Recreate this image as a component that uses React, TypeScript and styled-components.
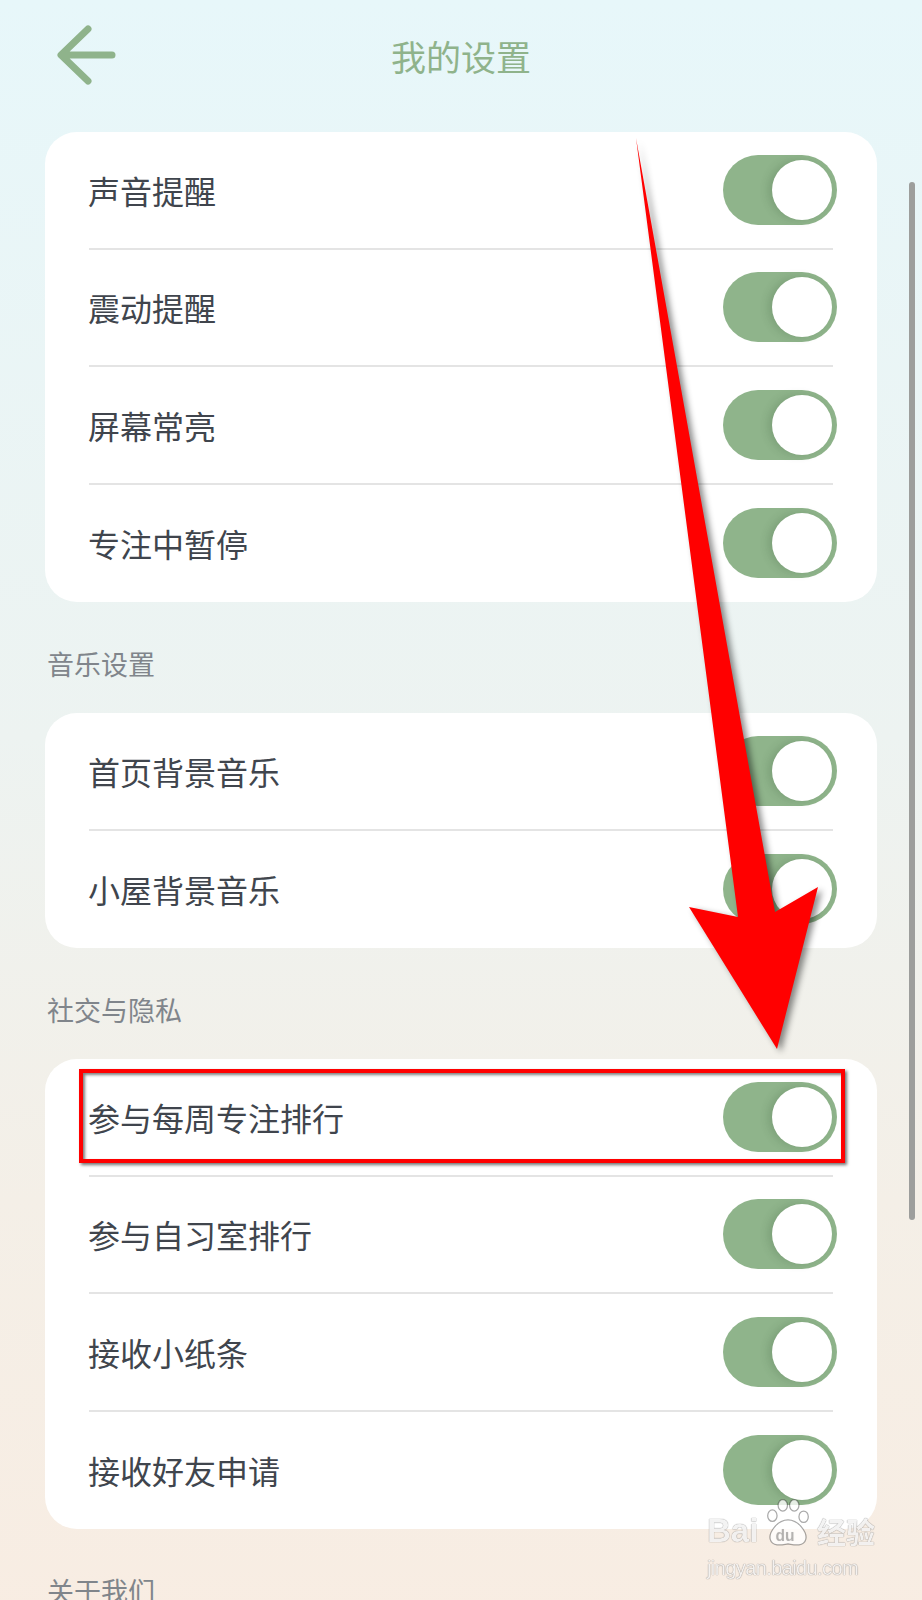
import React from 'react'
import styled, { createGlobalStyle } from 'styled-components'

const GlobalStyle = createGlobalStyle`
  html, body {
    margin: 0;
    padding: 0;
  }
  body {
    font-family: "Noto Sans CJK SC", "Noto Sans", sans-serif;
    background: linear-gradient(180deg, #e7f7fa 0%, #edf3f1 38%, #f4efe7 62%, #fbebdf 100%);
    min-height: 1600px;
  }
`

const Page = styled.div`
  position: relative;
  padding: 0 45px 60px;
  min-height: 1600px;
  box-sizing: border-box;
`

const Header = styled.header`
  display: grid;
  grid-template-columns: 1fr auto 1fr;
  align-items: center;
  height: 110px;
`

const BackButton = styled.button`
  justify-self: start;
  margin-left: 9px;
  padding: 0;
  border: 0;
  background: none;
  display: flex;
  cursor: pointer;
`

const Title = styled.h1`
  margin: 0;
  font-size: 35px;
  font-weight: 400;
  color: #8fb38b;
`

const Card = styled.section<{ $first?: boolean }>`
  margin-top: ${p => (p.$first ? '22px' : '0')};
  background: #fff;
  border-radius: 32px;
  overflow: hidden;
`

const Row = styled.div`
  display: flex;
  align-items: center;
  justify-content: space-between;
  height: 117.5px;
  box-sizing: border-box;
  margin: 0 44px;
  border-bottom: 2px solid #e4e4e4;
  &:last-child {
    border-bottom: none;
  }
`

const Label = styled.span`
  font-size: 32px;
  color: #40454d;
  margin-left: -1px;
`

const Track = styled.div<{ $on: boolean }>`
  width: 114px;
  height: 70px;
  margin-right: -4px;
  border-radius: 35px;
  background: ${p => (p.$on ? '#8fb48b' : '#d9d9d9')};
  display: flex;
  align-items: center;
  justify-content: ${p => (p.$on ? 'flex-end' : 'flex-start')};
  padding: 0 5px;
  box-sizing: border-box;
`

const Knob = styled.div`
  width: 60px;
  height: 60px;
  border-radius: 50%;
  background: #fff;
  box-shadow: -4px 0 8px rgba(40, 70, 40, 0.18);
`

const SectionTitle = styled.h2`
  margin: 0;
  padding: 48px 0 36px 2px;
  font-size: 27px;
  line-height: 27px;
  font-weight: 400;
  color: #80858b;
`

const Scrollbar = styled.div`
  position: absolute;
  left: 909px;
  top: 182px;
  width: 6px;
  height: 1038px;
  border-radius: 3px;
  background: #9d9e9c;
`

const Overlay = styled.div`
  position: absolute;
  left: 0;
  top: 0;
  width: 922px;
  height: 1600px;
  pointer-events: none;
`

const ArrowSvg = styled.svg`
  position: absolute;
  left: 600px;
  top: 120px;
  filter: drop-shadow(4px 3px 3px rgba(0, 0, 0, 0.45));
`

const Highlight = styled.div`
  position: absolute;
  left: 79px;
  top: 1069px;
  width: 766px;
  height: 94px;
  box-sizing: border-box;
  border: 4px solid #ff0000;
  box-shadow: 2px 2px 3px rgba(0, 0, 0, 0.55), inset 2px 2px 3px rgba(0, 0, 0, 0.5);
`

const Watermark = styled.div`
  position: absolute;
  left: 707px;
  top: 1498px;
  width: 168px;
  display: flex;
  flex-direction: column;
  align-items: stretch;
  color: rgba(255, 255, 255, 0.92);
  text-shadow: 0 0 1px rgba(0, 0, 0, 0.5), 0 0 1px rgba(0, 0, 0, 0.3);
  font-family: "Liberation Sans", Arial, sans-serif;
  opacity: 0.85;
`

const MarkTop = styled.div`
  display: flex;
  align-items: flex-end;
  justify-content: space-between;
  font-size: 33px;
  line-height: 34px;
  font-weight: 700;
`

const MarkCn = styled.span`
  font-family: "Noto Sans CJK SC", sans-serif;
  font-size: 29px;
  line-height: 34px;
  font-weight: 700;
`

const MarkUrl = styled.div`
  margin-top: 10px;
  font-size: 20px;
  line-height: 20px;
  letter-spacing: -0.6px;
`

const groups = [
  { title: '', items: ['声音提醒', '震动提醒', '屏幕常亮', '专注中暂停'] },
  { title: '音乐设置', items: ['首页背景音乐', '小屋背景音乐'] },
  { title: '社交与隐私', items: ['参与每周专注排行', '参与自习室排行', '接收小纸条', '接收好友申请'] },
  { title: '关于我们', items: ['关于我们', '用户协议'] },
]

function Toggle(props: { on: boolean }) {
  return (
    <Track $on={props.on}>
      <Knob />
    </Track>
  )
}

export default function App() {
  return (
    <>
      <GlobalStyle />
      <Page>
        <Header>
          <BackButton aria-label="返回">
            <svg width="64" height="64" viewBox="0 0 64 64">
              <path
                d="M34 6 L7 32 L34 58 M8 32 H58"
                fill="none"
                stroke="#8fb38b"
                strokeWidth="7"
                strokeLinecap="round"
                strokeLinejoin="round"
              />
            </svg>
          </BackButton>
          <Title>我的设置</Title>
          <span />
        </Header>

        {groups.map((g, gi) => (
          <React.Fragment key={gi}>
            {g.title && <SectionTitle>{g.title}</SectionTitle>}
            <Card $first={gi === 0}>
              {g.items.map(item => (
                <Row key={item}>
                  <Label>{item}</Label>
                  <Toggle on />
                </Row>
              ))}
            </Card>
          </React.Fragment>
        ))}

        <Scrollbar />

        <Overlay>
          <ArrowSvg width="260" height="960" viewBox="0 0 260 960">
            <polygon
              points="36,18 175,792 218,767 177,929 89,787 138,797"
              fill="#ff0000"
            />
          </ArrowSvg>
          <Highlight />
          <Watermark>
            <MarkTop>
              <span>Bai</span>
              <svg width="50" height="50" viewBox="0 0 48 48">
                <g fill="rgba(255,255,255,0.92)" stroke="rgba(0,0,0,0.4)" strokeWidth="1.2">
                  <ellipse cx="9" cy="17" rx="4.5" ry="5.5" />
                  <ellipse cx="19" cy="7" rx="4.5" ry="5.5" />
                  <ellipse cx="30" cy="7" rx="4.5" ry="5.5" />
                  <ellipse cx="39" cy="18" rx="4.5" ry="5.5" />
                  <path d="M24 21 C14 21 5 33 7 40 C9 47 18 45 24 44 C30 45 39 47 41 40 C43 33 34 21 24 21 Z" />
                </g>
                <text x="12" y="41" fontSize="15" fontWeight="700" fill="rgba(0,0,0,0.22)" fontFamily="Liberation Sans, sans-serif">du</text>
              </svg>
              <MarkCn>经验</MarkCn>
            </MarkTop>
            <MarkUrl>jingyan.baidu.com</MarkUrl>
          </Watermark>
        </Overlay>
      </Page>
    </>
  )
}
